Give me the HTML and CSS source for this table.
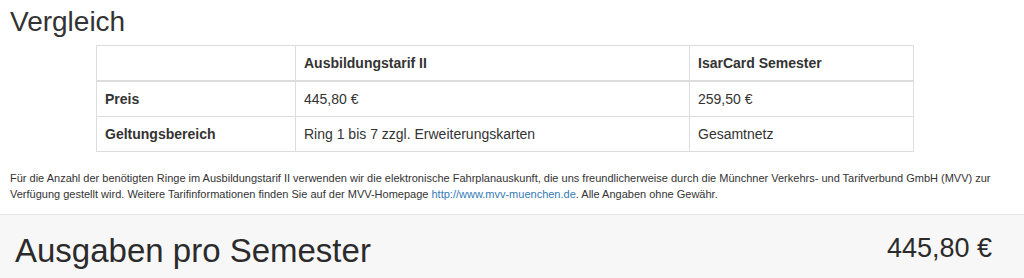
FILE: index.html
```html
<!DOCTYPE html>
<html lang="de">
<head>
<meta charset="utf-8">
<title>Vergleich</title>
<link rel="stylesheet" href="styles.css">
</head>
<body>
<div class="page">
  <h2 class="title">Vergleich</h2>
  <table class="cmp">
    <colgroup>
      <col class="c1"><col class="c2"><col class="c3">
    </colgroup>
    <thead>
      <tr><th></th><th>Ausbildungstarif II</th><th>IsarCard Semester</th></tr>
    </thead>
    <tbody>
      <tr><th>Preis</th><td>445,80 €</td><td>259,50 €</td></tr>
      <tr><th>Geltungsbereich</th><td>Ring 1 bis 7 zzgl. Erweiterungskarten</td><td>Gesamtnetz</td></tr>
    </tbody>
  </table>
  <p class="note">Für die Anzahl der benötigten Ringe im Ausbildungstarif II verwenden wir die elektronische Fahrplanauskunft, die uns freundlicherweise durch die Münchner Verkehrs- und Tarifverbund GmbH (MVV) zur Verfügung gestellt wird. Weitere Tarifinformationen finden Sie auf der MVV-Homepage <a href="#">http://www.mvv-muenchen.de</a>. Alle Angaben ohne Gewähr.</p>
</div>
<div class="total">
  <span class="total-label">Ausgaben pro Semester</span>
  <span class="total-value">445,80 €</span>
</div>
</body>
</html>
```

FILE: styles.css
```css
html, body {
  margin: 0;
  padding: 0;
  background: #fff;
  color: #333;
  font-family: "Liberation Sans", Arial, sans-serif;
}
.page {
  padding: 6px 10px 0 10px;
}
.title {
  margin: 0 0 8px 0;
  font-size: 28px;
  line-height: 31px;
  font-weight: normal;
  color: #333;
}
.cmp {
  margin-left: 86px;
  width: 817px;
  border-collapse: collapse;
  table-layout: fixed;
  font-size: 14px;
  line-height: 20px;
}
.c1 { width: 199px; }
.c2 { width: 394px; }
.c3 { width: 224px; }
.cmp th, .cmp td {
  border: 1px solid #ddd;
  padding: 7px 8px;
  text-align: left;
  vertical-align: top;
}
.cmp th { font-weight: bold; }
.cmp thead th { border-bottom: 2px solid #ddd; }
.note {
  margin: 18px 0 0 0;
  font-size: 11px;
  line-height: 16px;
  width: 995px;
}
.note a {
  color: #337ab7;
  text-decoration: none;
}
.total {
  margin-top: 12px;
  border-top: 1px solid #e7e7e7;
  background: #f7f7f7;
  display: flex;
  justify-content: space-between;
  align-items: flex-start;
  padding: 18px 32px 20px 15px;
  color: #2b2b2b;
}
.total-label {
  font-size: 33px;
  line-height: 36px;
}
.total-value {
  font-size: 27px;
  line-height: 30px;
}
```
